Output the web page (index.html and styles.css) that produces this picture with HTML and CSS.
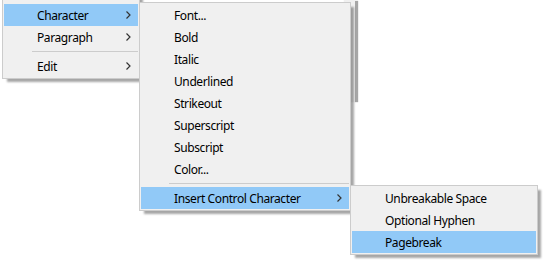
FILE: index.html
```html
<!DOCTYPE html>
<html lang="en">
<head>
    <meta charset="UTF-8">
    <meta name="viewport" content="width=device-width, initial-scale=1.0">
    <title>Menu</title>
    <link rel="stylesheet" href="styles.css">
</head>
<body>
    <div class="desk">
        <div class="ghost"></div>

        <ul class="menu menu-main">
            <li class="item"></li>
            <li class="item active"><span>Character</span><svg class="arrow" width="5" height="8" viewBox="0 0 5 8"><polyline points="0.5,0.5 4,4 0.5,7.5"/></svg></li>
            <li class="item"><span>Paragraph</span><svg class="arrow" width="5" height="8" viewBox="0 0 5 8"><polyline points="0.5,0.5 4,4 0.5,7.5"/></svg></li>
            <li class="sep"></li>
            <li class="item"><span>Edit</span><svg class="arrow" width="5" height="8" viewBox="0 0 5 8"><polyline points="0.5,0.5 4,4 0.5,7.5"/></svg></li>
        </ul>

        <ul class="menu menu-char">
            <li class="item"><span>Font...</span></li>
            <li class="item"><span>Bold</span></li>
            <li class="item"><span>Italic</span></li>
            <li class="item"><span>Underlined</span></li>
            <li class="item"><span>Strikeout</span></li>
            <li class="item"><span>Superscript</span></li>
            <li class="item"><span>Subscript</span></li>
            <li class="item"><span>Color...</span></li>
            <li class="sep"></li>
            <li class="item active"><span>Insert Control Character</span><svg class="arrow" width="5" height="8" viewBox="0 0 5 8"><polyline points="0.5,0.5 4,4 0.5,7.5"/></svg></li>
        </ul>

        <ul class="menu menu-ctrl">
            <li class="item"><span>Unbreakable Space</span></li>
            <li class="item"><span>Optional Hyphen</span></li>
            <li class="item active"><span>Pagebreak</span></li>
        </ul>
    </div>
</body>
</html>
```

FILE: styles.css
```css
body {
    margin: 0;
    padding: 0;
    background-color: #fff;
    font-family: "Noto Sans", "Open Sans", sans-serif;
    font-size: 12px;
    letter-spacing: -0.4px;
    color: #000;
}
.desk {
    position: relative;
    width: 543px;
    height: 260px;
    overflow: hidden;
}
.menu {
    position: absolute;
    list-style-type: none;
    margin: 0;
    padding: 1px;
    background-color: #f0f0f0;
    border: 1px solid #ccc;
    box-shadow: 4px 4px 2px -1px rgba(0, 0, 0, 0.35);
}
.menu-main {
    left: 2px;
    top: -20px;
    width: 134px;
}
.menu-char {
    left: 139px;
    top: 2px;
    width: 208px;
}
.menu-ctrl {
    left: 350px;
    top: 185px;
    width: 184px;
}
.item {
    display: flex;
    align-items: center;
    height: 22px;
    padding-left: 33px;
    padding-right: 7px;
}
.item span {
    flex: 1;
    white-space: nowrap;
}
.item.active {
    background-color: #91c9f7;
}
.arrow {
    display: block;
}
.arrow polyline {
    fill: none;
    stroke: #333;
    stroke-width: 1.2;
}
.sep {
    height: 7px;
    margin-left: 28px;
    position: relative;
}
.sep::after {
    content: "";
    position: absolute;
    left: 0;
    right: 0;
    top: 3px;
    height: 1px;
    background-color: #ccc;
}
.ghost {
    position: absolute;
    left: 343px;
    top: 0;
    width: 11px;
    height: 102px;
    background-color: #f0f0f0;
    border-left: 1px solid #fbfbfb;
    border-bottom: 1px solid #fbfbfb;
    box-shadow: 4px 0 1px -1px rgba(0, 0, 0, 0.35);
}
```
